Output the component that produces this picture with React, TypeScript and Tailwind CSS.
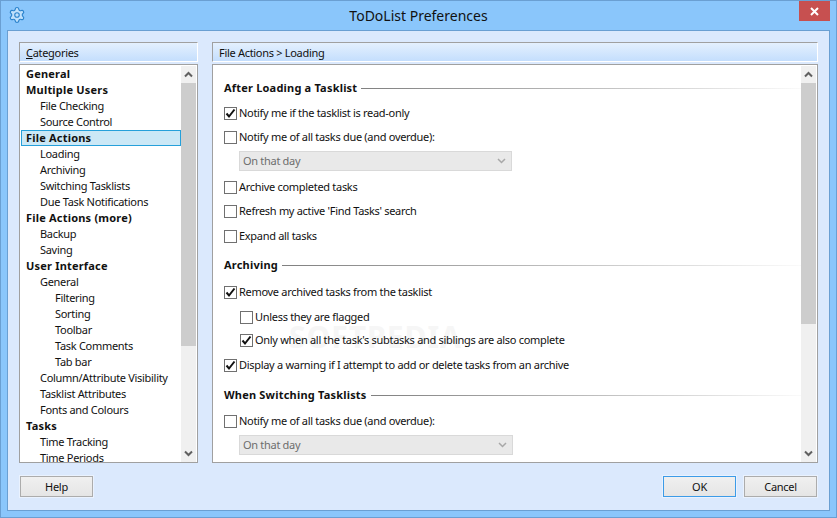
import { ReactNode } from "react";
import { Settings } from "lucide-react";

const categories: { label: string; level: 0 | 1 | 2; selected?: boolean }[] = [
  { label: "General", level: 0 },
  { label: "Multiple Users", level: 0 },
  { label: "File Checking", level: 1 },
  { label: "Source Control", level: 1 },
  { label: "File Actions", level: 0, selected: true },
  { label: "Loading", level: 1 },
  { label: "Archiving", level: 1 },
  { label: "Switching Tasklists", level: 1 },
  { label: "Due Task Notifications", level: 1 },
  { label: "File Actions (more)", level: 0 },
  { label: "Backup", level: 1 },
  { label: "Saving", level: 1 },
  { label: "User Interface", level: 0 },
  { label: "General", level: 1 },
  { label: "Filtering", level: 2 },
  { label: "Sorting", level: 2 },
  { label: "Toolbar", level: 2 },
  { label: "Task Comments", level: 2 },
  { label: "Tab bar", level: 2 },
  { label: "Column/Attribute Visibility", level: 1 },
  { label: "Tasklist Attributes", level: 1 },
  { label: "Fonts and Colours", level: 1 },
  { label: "Tasks", level: 0 },
  { label: "Time Tracking", level: 1 },
  { label: "Time Periods", level: 1 },
];

const levelClass = {
  0: "pl-[5px] font-bold tracking-[0.2px]",
  1: "pl-[19px]",
  2: "pl-[34px]",
};

const Chevron = ({ down }: { down?: boolean }) => (
  <svg width="9" height="7" viewBox="0 0 9 7" className={down ? "rotate-180" : ""}>
    <path d="M1 5.5 L4.5 2 L8 5.5" fill="none" stroke="#606060" strokeWidth="2" />
  </svg>
);

const Scrollbar = ({ thumb }: { thumb: string }) => (
  <div className="w-[15px] shrink-0 flex flex-col bg-[#f0f0f0]">
    <div className="h-[17px] shrink-0 flex items-center justify-center">
      <Chevron />
    </div>
    <div className={`${thumb} shrink-0 bg-[#cdcdcd]`} />
    <div className="flex-1" />
    <div className="h-[17px] shrink-0 flex items-center justify-center">
      <Chevron down />
    </div>
  </div>
);

const Check = ({ label, checked, className = "" }: { label: string; checked?: boolean; className?: string }) => (
  <div className={`h-4 flex items-center shrink-0 ${className}`}>
    <div className="w-[13px] h-[13px] border border-[#707070] bg-white flex items-center justify-center shrink-0">
      {checked && (
        <svg width="11" height="11" viewBox="0 0 11 11">
          <path d="M1.5 5.5 L4 8.5 L9.5 1.5" fill="none" stroke="#111" strokeWidth="2" />
        </svg>
      )}
    </div>
    <span className="ml-[2px] whitespace-nowrap">{label}</span>
  </div>
);

const Heading = ({ label, className = "" }: { label: string; className?: string }) => (
  <div className={`h-4 flex items-center shrink-0 ${className}`}>
    <span className="font-bold tracking-[0.2px] whitespace-nowrap">{label}</span>
    <div className="ml-[4px] flex-1 h-px bg-linear-to-r from-[#808080] to-[#fafafa]" />
  </div>
);

const Combo = ({ width }: { width: string }) => (
  <div className={`${width} h-5 mt-[6px] ml-[15px] shrink-0 flex items-center justify-between bg-[#e9e9e9] border border-[#d9d9d9] pl-[3px] pr-[5px] text-[#6d6d6d]`}>
    <span>On that day</span>
    <svg width="9" height="6" viewBox="0 0 9 6">
      <path d="M1 1 L4.5 4.5 L8 1" fill="none" stroke="#a8a8a8" strokeWidth="1.5" />
    </svg>
  </div>
);

const HeaderStrip = ({ children }: { children: ReactNode }) => (
  <div className="h-5 flex items-center pl-[6px] pt-px border-t border-l border-t-[#a0a0a0] border-l-[#a0a0a0] border-r border-b border-r-white border-b-white bg-linear-to-b from-[#e4f0fe] to-[#c4defd]">
    {children}
  </div>
);

const Button = ({ children, focused }: { children: ReactNode; focused?: boolean }) => (
  <div className={`w-[73px] h-[21px] flex items-center justify-center border bg-linear-to-b from-[#f0f0f0] to-[#e5e5e5] shadow-[0_0_0_1px_#eaf2fe] ${focused ? "border-[#3c9be8]" : "border-[#acacac]"}`}>
    {children}
  </div>
);

export default function App() {
  return (
    <div
      className="w-[837px] h-[518px] flex flex-col bg-[#8ac6fb] border border-[#6a9fd2] text-[11px] tracking-[-0.3px] leading-4 text-[#111] overflow-hidden"
      style={{ fontFamily: '"Noto Sans", sans-serif' }}
    >
      {/* title bar */}
      <div className="h-[29px] shrink-0 relative flex items-start justify-center">
        <Settings size={18} strokeWidth={1.5} fill="#bfe0fb" className="absolute left-[7px] top-[5px] text-[#2b83cc]" />
        <span className="mt-[6px] text-[14px] tracking-normal leading-[18px]">ToDoList Preferences</span>
        <div className="absolute right-[6px] top-0 w-[31px] h-[20px] bg-[#c75050] flex items-center justify-center">
          <svg width="9" height="9" viewBox="0 0 9 9">
            <path d="M1 1 L8 8 M8 1 L1 8" stroke="#fff" strokeWidth="2" />
          </svg>
        </div>
      </div>

      {/* client area */}
      <div className="flex-1 mx-[6px] mb-[6px] border border-[#6a9fd2] bg-[#dbe9fd] px-[11px] pt-[11px] flex flex-col">
        <div className="h-[421px] flex gap-[14px]">
          {/* categories */}
          <div className="w-[179px] flex flex-col gap-[2px]">
            <HeaderStrip>
              <span><u>C</u>ategories</span>
            </HeaderStrip>
            <div className="flex-1 min-h-0 border border-[#a0a0a0] bg-white flex pl-px pr-px pt-px overflow-hidden">
              <div className="flex-1 min-w-0 overflow-hidden">
                {categories.map((c, i) => (
                  <div
                    key={i}
                    className={`h-4 whitespace-nowrap flex items-center ${levelClass[c.level]} ${c.selected ? "bg-[#cbe8f6] outline outline-[#26a0da] -outline-offset-1" : ""}`}
                  >
                    {c.label}
                  </div>
                ))}
              </div>
              <Scrollbar thumb="h-[263px]" />
            </div>
          </div>

          {/* page */}
          <div className="flex-1 flex flex-col gap-[2px]">
            <HeaderStrip>File Actions &gt; Loading</HeaderStrip>
            <div className="flex-1 min-h-0 border border-[#a0a0a0] bg-white flex pt-px pr-px relative overflow-hidden">
              <span className="absolute left-[76px] top-[256px] text-[30px] leading-8 font-bold tracking-[1px] text-[#f6f6f6] pointer-events-none">
                SOFTPEDIA
              </span>
              <div className="relative flex-1 min-w-0 pl-[11px] pt-[14px] flex flex-col">
                <Heading label="After Loading a Tasklist" />
                <Check className="mt-[9px]" checked label="Notify me if the tasklist is read-only" />
                <Check className="mt-[8px]" label="Notify me of all tasks due (and overdue):" />
                <Combo width="w-[273px]" />
                <Check className="mt-[8px]" label="Archive completed tasks" />
                <Check className="mt-[8px]" label="Refresh my active 'Find Tasks' search" />
                <Check className="mt-[9px]" label="Expand all tasks" />
                <Heading className="mt-[13px]" label="Archiving" />
                <Check className="mt-[11px]" checked label="Remove archived tasks from the tasklist" />
                <Check className="mt-[9px] ml-[16px]" label="Unless they are flagged" />
                <Check className="mt-[7px] ml-[16px]" checked label="Only when all the task's subtasks and siblings are also complete" />
                <Check className="mt-[9px]" checked label="Display a warning if I attempt to add or delete tasks from an archive" />
                <Heading className="mt-[14px]" label="When Switching Tasklists" />
                <Check className="mt-[10px]" label="Notify me of all tasks due (and overdue):" />
                <Combo width="w-[274px]" />
              </div>
              <Scrollbar thumb="h-[241px]" />
            </div>
          </div>
        </div>

        {/* buttons */}
        <div className="mt-[13px] flex pl-px pr-px">
          <Button>Help</Button>
          <div className="ml-auto flex gap-[8px]">
            <Button focused>OK</Button>
            <Button>Cancel</Button>
          </div>
        </div>
      </div>
    </div>
  );
}
